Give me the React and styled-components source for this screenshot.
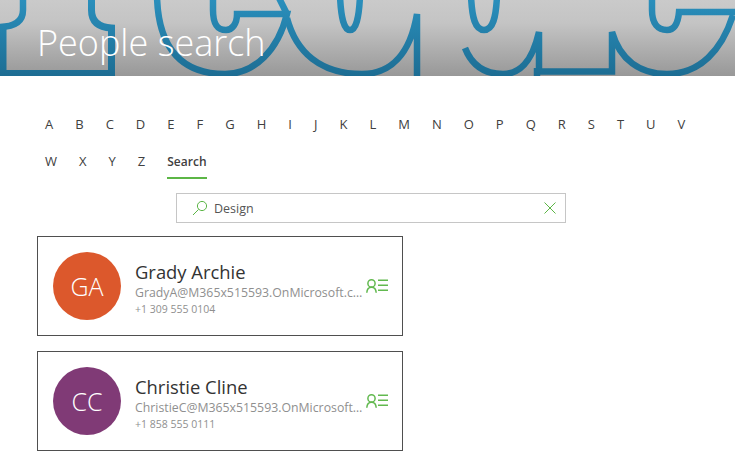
import React from "react";
import styled, { createGlobalStyle } from "styled-components";

const Global = createGlobalStyle`
  html, body { margin: 0; padding: 0; background: #fff; }
  body { font-family: "Open Sans", "Noto Sans", sans-serif; color: #333; }
`;
const Page = styled.div`
  width: 735px; height: 466px; overflow: hidden; background: #fff;
  display: flex; flex-direction: column;
`;
const Banner = styled.header`
  position: relative; height: 76px; flex: none; overflow: hidden;
  background: linear-gradient(#cacaca, #c4c4c4 30%, #989898);
  display: flex; align-items: flex-end; padding: 0 0 9px 37px; box-sizing: border-box;
`;
const BannerArt = styled.svg`
  position: absolute; inset: 0; width: 735px; height: 76px;
`;
const Title = styled.h1`
  position: relative; margin: 0; font-size: 36px; line-height: 48px; font-weight: 300; color: #fff;
`;
const Tabs = styled.nav`
  display: flex; flex-wrap: wrap; column-gap: 22px; row-gap: 0;
  width: 670px; padding: 30px 0 0 45px;
`;
const Tab = styled.span`
  box-sizing: border-box; color: #404040;
  line-height: 37px;
  font-size: ${p => (p.$active ? "12px" : "13px")};
  font-weight: ${p => (p.$active ? 600 : 400)};
  border-bottom: ${p => (p.$active ? "2px solid #5cb646" : "none")};
  height: ${p => (p.$active ? "36px" : "37px")};
`;
const SearchBox = styled.div`
  display: flex; align-items: center; box-sizing: border-box;
  width: 390px; height: 30px; margin: 13px 0 0 176px; padding: 0 9px 0 15px;
  border: 1px solid #c6c6c6;
`;
const SearchText = styled.span`
  flex: 1; margin-left: 6px; font-size: 12.5px; color: #555;
`;
const CardList = styled.div`
  display: flex; flex-direction: column; gap: 15px; margin: 13px 0 0 37px;
`;
const Card = styled.article`
  box-sizing: border-box; width: 366px; height: 100px; border: 1px solid #4f4f4f;
  display: flex; align-items: center; padding: 0 14px 0 15px;
`;
const Avatar = styled.div`
  flex: none; width: 68px; height: 68px; border-radius: 50%;
  background: ${p => p.$bg}; color: #fff; font-size: 25px; font-weight: 300;
  display: flex; align-items: center; justify-content: center;
`;
const Info = styled.div`
  flex: none; width: 229px; margin: 5px 0 0 14px; min-width: 0;
`;
const Name = styled.div`
  font-size: 18.4px; line-height: 24px; color: #333;
`;
const Email = styled.div`
  font-size: 12.3px; line-height: 17px; color: #8f8f8f;
  white-space: nowrap; overflow: hidden; text-overflow: ellipsis;
`;
const Phone = styled.div`
  font-size: 10.5px; line-height: 15px; margin-top: 1px; color: #8f8f8f;
`;
const ContactIcon = styled.svg`
  flex: none; width: 23px; height: 14px; margin-left: 2px;
`;

const letters = "ABCDEFGHIJKLMNOPQRSTUVWXYZ".split("");
const people = [
  { initials: "GA", bg: "#dc582c", name: "Grady Archie", email: "GradyA@M365x515593.OnMicrosoft.com", phone: "+1 309 555 0104" },
  { initials: "CC", bg: "#803a76", name: "Christie Cline", email: "ChristieC@M365x515593.OnMicrosoft.com", phone: "+1 858 555 0111" },
];

export default function App() {
  return (
    <Page>
      <Global />
      <Banner>
        <BannerArt viewBox="0 0 735 76">
          <defs>
            <linearGradient id="ink" gradientUnits="userSpaceOnUse" x1="0" y1="0" x2="0" y2="76">
              <stop offset="0" stopColor="#2a8fbc" />
              <stop offset="1" stopColor="#1d6d93" />
            </linearGradient>
          </defs>
          <g fill="none" stroke="url(#ink)" strokeWidth="6.5">
            <path d="M23,-4 V10 Q23,27 -2,27" />
            <path d="M3,27 V73.5 H111.5 V28 Q91.5,27 91.5,10 V-4" strokeWidth="7" />
            <path d="M157,-4 C158,40 175,74 225,74 C255,74 278,50 287,14 H237 C237,24 232,30 226,30 C216,30 213,22 213,10 V-4" />
            <path d="M287,14 L278,-4" />
            <path d="M287,18 C296,52 320,74 362,74 C390,74 410,55 417,14 V80" />
            <path d="M340,-4 C341,18 344,30 350,30 C356,30 359,18 360,-4" />
            <path d="M465,48 C472,66 485,74 503,74 C520,74 532,62 539,32 V71.5 H612 V32 C620,60 640,74 667,74 C700,74 722,50 733,15" />
            <path d="M537,68 V80" />
            <path d="M471,-4 C472,18 475,30 484,30 C493,30 496,18 497,-4" />
            <path d="M652,-4 V10 C652,24 658,30 667,30 C674,30 678,24 679,12 H740" />
          </g>
        </BannerArt>
        <Title>People search</Title>
      </Banner>
      <Tabs>
        {letters.map(l => <Tab key={l}>{l}</Tab>)}
        <Tab $active>Search</Tab>
      </Tabs>
      <SearchBox>
        <svg width="16" height="16" viewBox="0 0 16 16" fill="none" stroke="#5cb646" strokeWidth="1">
          <circle cx="10" cy="6" r="4.6" />
          <path d="M6.6,9.4 L1,15" />
        </svg>
        <SearchText>Design</SearchText>
        <svg width="12" height="12" viewBox="0 0 12 12" fill="none" stroke="#5cb646" strokeWidth="1">
          <path d="M0.5,0.5 L11.5,11.5 M11.5,0.5 L0.5,11.5" />
        </svg>
      </SearchBox>
      <CardList>
        {people.map(p => (
          <Card key={p.initials}>
            <Avatar $bg={p.bg}>{p.initials}</Avatar>
            <Info>
              <Name>{p.name}</Name>
              <Email>{p.email}</Email>
              <Phone>{p.phone}</Phone>
            </Info>
            <ContactIcon viewBox="0 0 23 14" fill="none" stroke="#62b94f" strokeWidth="1.5">
              <circle cx="5.5" cy="4.4" r="3.6" />
              <path d="M0.8,13.8 C1,10 3,8.2 5.5,8.2 C8,8.2 10,10 10.2,13.8" />
              <path d="M12,1.2 H22 M12,6.2 H22 M12,11.2 H22" />
            </ContactIcon>
          </Card>
        ))}
      </CardList>
    </Page>
  );
}
